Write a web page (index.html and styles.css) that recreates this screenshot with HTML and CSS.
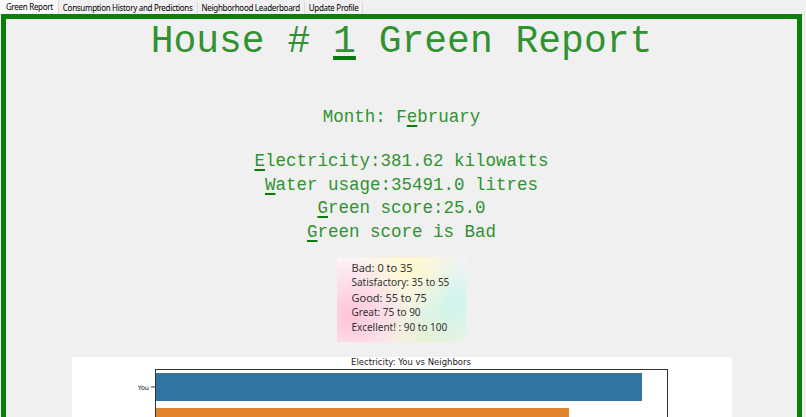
FILE: index.html
```html
<!DOCTYPE html>
<html lang="en">
<head>
  <meta charset="UTF-8" />
  <title>Green Report</title>
  <meta name="viewport" content="width=device-width, initial-scale=1.0" />
  <link rel="stylesheet" href="styles.css">
</head>
<body>

  <!-- Notebook tabs -->
  <nav class="tabs">
    <a class="tab active" href="#report">Green Report</a>
    <a class="tab" href="#history">Consumption History and Predictions</a>
    <a class="tab" href="#leaderboard">Neighborhood Leaderboard</a>
    <a class="tab" href="#profile">Update Profile</a>
  </nav>

  <!-- Report frame -->
  <main class="frame" id="report">
    <h1 class="title">House # <u class="mn big">1</u> Green Report</h1>

    <p class="month">Month: F<u class="mn">e</u>bruary</p>

    <div class="stats">
      <p><u class="mn">E</u>lectricity:381.62 kilowatts</p>
      <p><u class="mn">W</u>ater usage:35491.0 litres</p>
      <p><u class="mn">G</u>reen score:25.0</p>
      <p><u class="mn">G</u>reen score is Bad</p>
    </div>

    <!-- Score legend -->
    <div class="legend">
      <p class="lg">Bad: 0 to 35</p>
      <p>Satisfactory: 35 to 55</p>
      <p class="lg">Good: 55 to 75</p>
      <p>Great: 75 to 90</p>
      <p>Excellent! : 90 to 100</p>
    </div>

    <!-- Electricity chart -->
    <div class="chart">
      <svg width="660" height="120" viewBox="0 0 660 120">
        <text class="chart-title" x="339" y="8">Electricity: You vs Neighbors</text>
        <rect x="83.5" y="12.5" width="512" height="110" fill="none" stroke="#333" stroke-width="1" />
        <rect x="84" y="16" width="486" height="28" fill="#3274a1" />
        <rect x="84" y="51" width="413" height="28" fill="#e1812c" />
        <line x1="79" y1="30" x2="83" y2="30" stroke="#333" stroke-width="1" />
        <text class="tick" x="77" y="32.5">You</text>
      </svg>
    </div>
  </main>

</body>
</html>
```

FILE: styles.css
```css
html, body {
  overflow: hidden;
}

body {
  margin: 0;
  background-color: #f0f0f0;
  font-family: "Noto Sans", sans-serif;
}

p {
  margin: 0;
}

/* Tabs */
.tabs {
  display: flex;
  height: 14px;
  align-items: flex-end;
}

.tab {
  height: 12px;
  padding: 0 4px;
  font-size: 8px;
  letter-spacing: -0.3px;
  line-height: 12px;
  color: #000;
  text-decoration: none;
  border-right: 1px solid #d9d9d9;
}

.tab.active {
  height: 14px;
  line-height: 14px;
  background-color: #f9f9f9;
  padding: 0 5px 0 6px;
}

/* Frame */
.frame {
  margin-left: 1px;
  width: 791px;
  min-height: 420px;
  border: 5px solid #0a7f0a;
  display: flex;
  flex-direction: column;
  align-items: center;
  font-family: "Courier New", "Nimbus Mono PS", "FreeMono", "Liberation Mono", monospace;
  color: #329232;
}

.frame > * {
  flex-shrink: 0;
}

.title {
  margin: 2px 0 0;
  font-size: 38px;
  font-weight: normal;
  line-height: 42px;
}

.mn {
  text-decoration: underline;
  text-decoration-color: #0a7a0a;
  text-decoration-thickness: 2px;
  text-underline-offset: 3px;
}

.mn.big {
  text-decoration-thickness: 4px;
  text-underline-offset: 4px;
}

.month {
  margin-top: 42px;
  font-size: 17.5px;
  line-height: 24px;
}

.stats {
  margin-top: 21px;
  font-size: 17.5px;
  line-height: 23.5px;
  text-align: center;
}

/* Legend */
.legend {
  margin-top: 13px;
  width: 115px;
  height: 82px;
  padding: 3px 0 0 15px;
  font-family: "Noto Sans", sans-serif;
  font-size: 10px;
  line-height: 15px;
  color: #333;
  background:
    radial-gradient(circle at 10% 70%, rgba(255, 190, 215, 0.9), transparent 45%),
    radial-gradient(circle at 55% 10%, rgba(255, 250, 200, 0.9), transparent 50%),
    radial-gradient(circle at 90% 55%, rgba(200, 245, 235, 0.9), transparent 45%),
    radial-gradient(circle at 70% 95%, rgba(235, 240, 200, 0.9), transparent 45%),
    #fbf3f6;
}

.legend .lg {
  font-size: 11px;
}

/* Chart */
.chart {
  margin-top: 15px;
  width: 660px;
  background-color: #fff;
}

.chart svg {
  display: block;
}

.chart-title {
  font-family: "DejaVu Sans", sans-serif;
  font-size: 8.5px;
  fill: #222;
  text-anchor: middle;
}

.tick {
  font-family: "DejaVu Sans", sans-serif;
  font-size: 6.5px;
  fill: #222;
  text-anchor: end;
}
```
